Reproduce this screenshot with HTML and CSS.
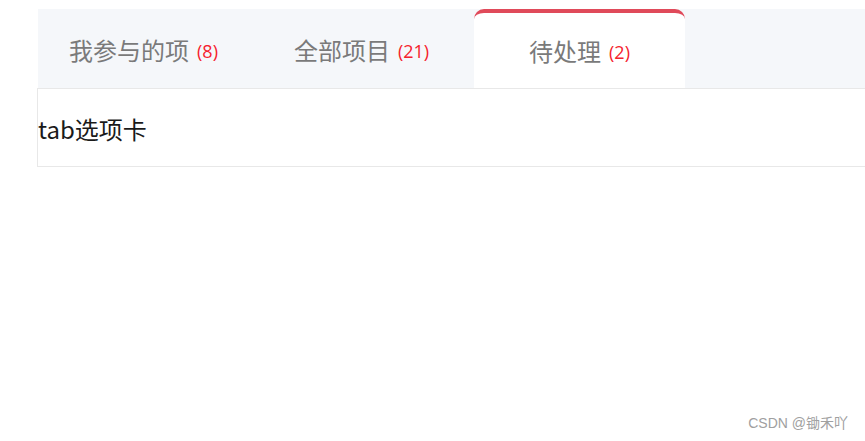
FILE: index.html
```html
<!DOCTYPE html>
<html lang="zh-CN">
<head>
    <meta charset="UTF-8">
    <meta name="viewport" content="width=device-width, initial-scale=1.0">
    <title>tab选项卡</title>
    <link rel="stylesheet" href="styles.css">
</head>
<body>
    <div class="tabs-wrap">
        <div class="tab-bar">
            <div class="tab">我参与的项 <span class="count">(8)</span></div>
            <div class="tab">全部项目 <span class="count">(21)</span></div>
            <div class="tab active">待处理 <span class="count">(2)</span></div>
        </div>
        <div class="tab-panel">tab选项卡</div>
    </div>

    <div class="watermark">CSDN @锄禾吖</div>
</body>
</html>
```

FILE: styles.css
```css
body {
    margin: 0;
    font-family: "Noto Sans CJK SC", "Noto Sans", sans-serif;
    background-color: #fff;
}
.tabs-wrap {
    padding-top: 9px;
    margin-left: 37px;
}
.tab-bar {
    display: flex;
    gap: 7px;
    height: 79px;
    margin-left: 1px;
    background-color: #f5f7fa;
}
.tab {
    width: 211px;
    display: flex;
    align-items: center;
    justify-content: center;
    gap: 8px;
    font-size: 24px;
    color: #7a7a7a;
    box-sizing: border-box;
    padding-top: 1px;
}
.tab .count {
    font-family: "Open Sans", "Noto Sans", sans-serif;
    font-size: 18px;
    color: #f5222d;
    padding-top: 3px;
}
.tab.active {
    background-color: #fff;
    border-top: 4px solid #e04a5a;
    border-radius: 10px 10px 0 0;
    padding-top: 0;
}
.tab-panel {
    height: 75px;
    border: 1px solid #e8e8e8;
    border-right: none;
    display: flex;
    align-items: center;
    padding-top: 2px;
    box-sizing: content-box;
    font-size: 24px;
    color: #1a1a1a;
}
.watermark {
    position: absolute;
    right: 17px;
    bottom: 9px;
    font-family: "Liberation Sans", "Noto Sans CJK SC", sans-serif;
    font-size: 14px;
    color: #a0a0a0;
}
```
